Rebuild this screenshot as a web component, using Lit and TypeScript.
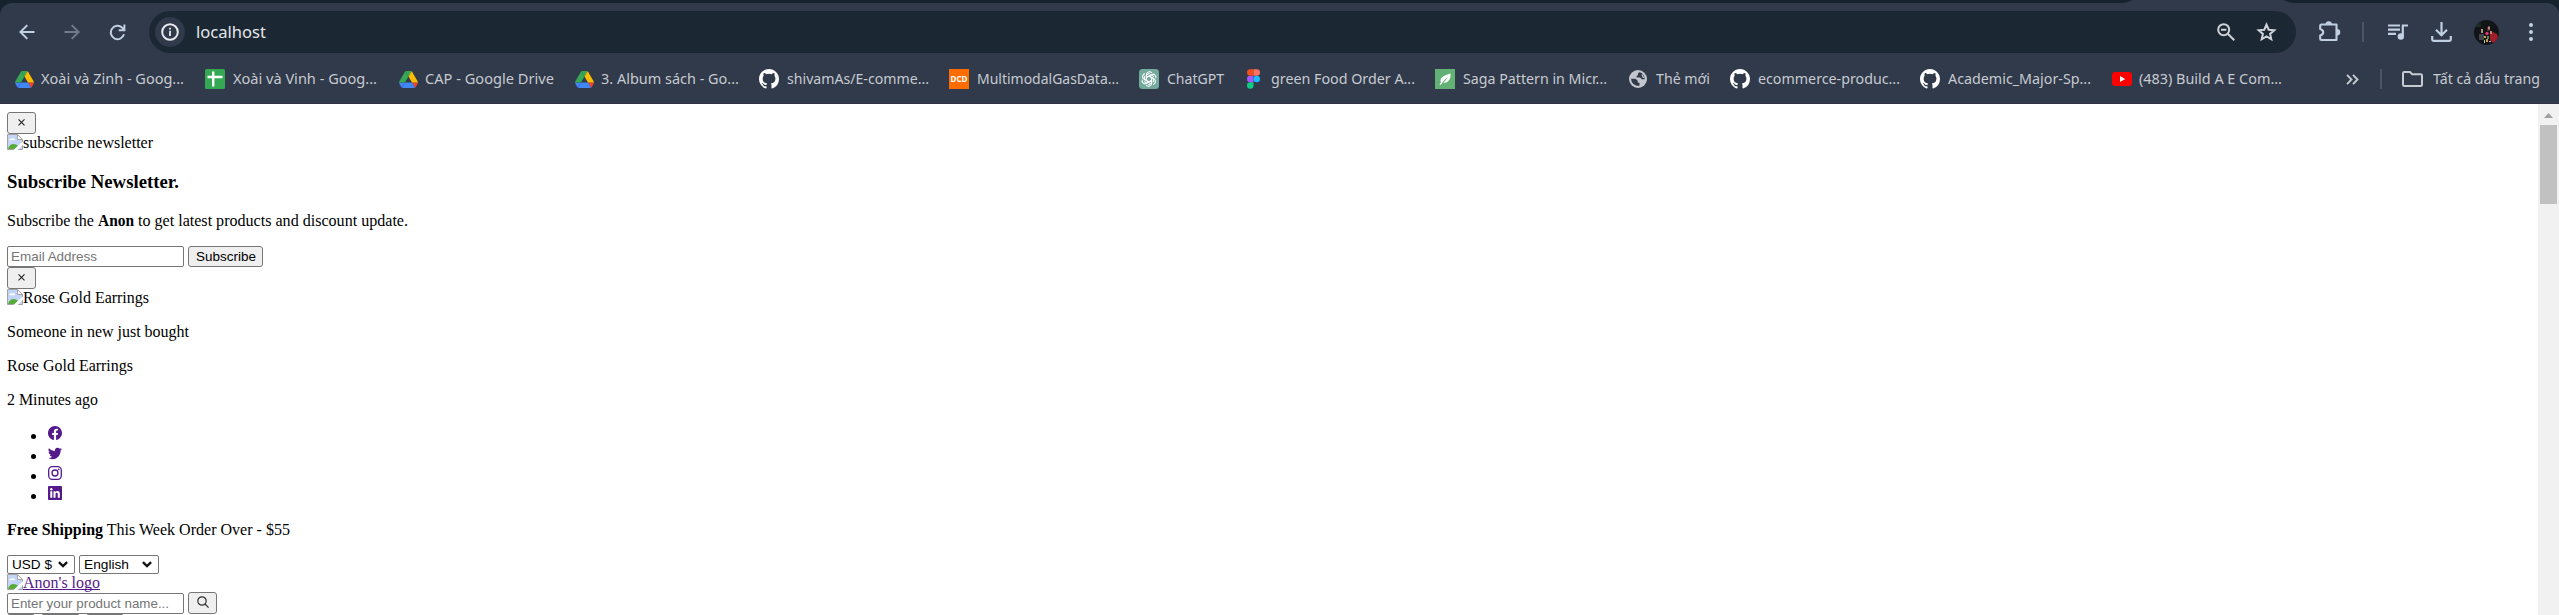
import { LitElement, html, css, svg } from "lit";
import { customElement } from "lit/decorators.js";

const drive = html`<svg width="19" height="17" viewBox="0 0 87.3 78"><path fill="#4285f4" d="M6.6 66.9l3.8 6.6c.8 1.4 2 2.5 3.3 3.3L27.5 53H0c0 1.5.4 3.1 1.2 4.5z"/><path fill="#34a853" d="M43.65 25L29.9 1.2c-1.3.8-2.5 1.9-3.3 3.3L1.2 48.5A9 9 0 0 0 0 53h27.5z"/><path fill="#ea4335" d="M73.55 76.8c1.3-.8 2.5-1.9 3.3-3.3l1.6-2.75 7.65-13.25c.8-1.4 1.2-3 1.2-4.5H59.8l5.85 11.5z"/><path fill="#34a853" d="M43.65 25L57.4 1.2A9 9 0 0 0 52.9 0H34.4c-1.6 0-3.2.4-4.5 1.2z"/><path fill="#4285f4" d="M59.8 53H27.5L13.75 76.8c1.35.8 2.9 1.2 4.5 1.2h50.8c1.6 0 3.2-.45 4.5-1.2z"/><path fill="#fbbc04" d="M73.4 26.5L60.7 4.5a9 9 0 0 0-3.3-3.3L43.65 25 59.8 53h27.45c0-1.55-.4-3.1-1.2-4.5z"/></svg>`;
const sheets = html`<svg width="20" height="20" viewBox="0 0 20 20"><rect width="20" height="20" rx="1.5" fill="#34a853"/><path d="M8.200 2.500v15M2.500 8h15" stroke="#fff" stroke-width="2.4"/></svg>`;
const github = html`<svg width="20" height="20" viewBox="0 0 16 16" fill="#fff"><path d="M8 0C3.58 0 0 3.58 0 8c0 3.54 2.29 6.53 5.47 7.59.4.07.55-.17.55-.38 0-.19-.01-.82-.01-1.49-2.01.37-2.53-.49-2.69-.94-.09-.23-.48-.94-.82-1.13-.28-.15-.68-.52-.01-.53.63-.01 1.08.58 1.23.82.72 1.21 1.87.87 2.33.66.07-.52.28-.87.51-1.07-1.78-.2-3.64-.89-3.64-3.95 0-.87.31-1.59.82-2.15-.08-.2-.36-1.02.08-2.12 0 0 .67-.21 2.2.82a7.6 7.6 0 0 1 4 0c1.53-1.04 2.2-.82 2.2-.82.44 1.1.16 1.92.08 2.12.51.56.82 1.27.82 2.15 0 3.07-1.87 3.75-3.65 3.95.29.25.54.73.54 1.48 0 1.07-.01 1.93-.01 2.2 0 .21.15.46.55.38A8 8 0 0 0 16 8c0-4.42-3.58-8-8-8z"/></svg>`;
const dcd = html`<span class="dcd">DCD</span>`;
const gpt = html`<svg width="20" height="20" viewBox="0 0 20 20"><rect width="20" height="20" rx="3.5" fill="#74aa9c"/><g fill="none" stroke="#fff" stroke-width="1.05">${[0, 60, 120, 180, 240, 300].map(a => svg`<path transform="rotate(${a} 10 10)" d="M7.4 11.5V5.700a3 3 0 0 1 5.300-1.900M7.400 8.500l4.600-2.700 3.200 1.800"/>`)}</g></svg>`;
const figma = html`<svg width="13" height="20" viewBox="0 0 200 300"><path fill="#0acf83" d="M50 300a50 50 0 0 0 50-50v-50H50a50 50 0 0 0 0 100z"/><path fill="#a259ff" d="M0 150a50 50 0 0 1 50-50h50v100H50a50 50 0 0 1-50-50z"/><path fill="#f24e1e" d="M0 50A50 50 0 0 1 50 0h50v100H50A50 50 0 0 1 0 50z"/><path fill="#ff7262" d="M100 0h50a50 50 0 0 1 0 100h-50z"/><circle cx="150" cy="150" r="50" fill="#1abcfe"/></svg>`;
const leaf = html`<svg width="20" height="20" viewBox="0 0 20 20"><rect width="20" height="20" fill="#63b175"/><path fill="#fff" d="M15.500 4.500c.5 6-2.500 9.500-7.200 9.300 1.700-1.700 3.200-3.600 4.500-5.900-2.300 2-4.600 4.300-7.300 8l-1-.3c.5-1 .9-1.600 1.400-2.400-1.700-5 3.500-6.700 9.600-8.700z"/></svg>`;
const globe = html`<svg width="18" height="18" viewBox="0 0 18 18"><circle cx="9" cy="9" r="9" fill="#c3c6cd"/><g fill="#303a4a"><path d="M10.500 2.200 9 3.300v1.900L7.300 6l.6 1.600h3.300l1.500 1.700h3.200C15.700 5.500 13.500 2.900 10.500 2.200z"/><path d="M2.200 8.700h4.300l2.200 2.100v2h1.800v2.900C5.800 16.200 2 13 2.200 8.700z"/></g><path d="m13 4.500 1 2.500 1.500.8" stroke="#c3c6cd" stroke-width="1.200" fill="none"/></svg>`;
const youtube = html`<svg width="20" height="14" viewBox="0 0 20 14"><rect width="20" height="14" rx="3" fill="#f00"/><path d="M8 4v6l5.200-3z" fill="#fff"/></svg>`;

const bookmarks: [unknown, string, number, number, number][] = [
  [drive, "Xoài và Zinh - Goog...", 15, 41, 143],
  [sheets, "Xoài và Vinh - Goog...", 205, 233, 144],
  [drive, "CAP - Google Drive", 399, 425, 129],
  [drive, "3. Album sách - Go...", 575, 601, 138],
  [github, "shivamAs/E-comme...", 759, 787, 142],
  [dcd, "MultimodalGasData...", 949, 977, 142],
  [gpt, "ChatGPT", 1139, 1167, 57],
  [figma, "green Food Order A...", 1247, 1271, 144],
  [leaf, "Saga Pattern in Micr...", 1435, 1463, 144],
  [globe, "Thẻ mới", 1629, 1656, 54],
  [github, "ecommerce-produc...", 1730, 1758, 142],
  [github, "Academic_Major-Sp...", 1920, 1948, 143],
  [youtube, "(483) Build A E Com...", 2112, 2139, 143],
];

/** Text set to an exact width. */
@customElement("fit-text")
class FitText extends LitElement {
  static properties = { w: { type: Number }, text: {} };
  declare w: number;
  declare text: string;
  static styles = css`:host{display:block;flex:none;white-space:pre}span{display:inline-block;transform-origin:0 50%;text-decoration:inherit}`;
  render() { return html`<span>${this.text}</span>`; }
  updated() {
    const s = this.renderRoot.querySelector("span") as HTMLElement;
    this.style.width = this.w + "px";
    s.style.transform = `scaleX(${this.w / s.getBoundingClientRect().width})`;
  }
}
const fit = (text: string, w: number) => html`<fit-text .w=${w} .text=${text}></fit-text>`;

@customElement("broken-image")
class BrokenImage extends LitElement {
  static styles = css`:host{display:block;flex:none;width:16px;height:16px}svg{display:block}`;
  render() {
    return html`<svg width="16" height="16" viewBox="0 0 16 16"><path d="M.5.5h10l5 5v10H.5z" fill="#c3d5f7"/><path d="M2.500 6.200c-.2-1.600 1.500-2.300 2.300-1.400C5.500 3.200 8 3.700 8 6.200z" fill="#fff"/><path d="M1 15c.8-3.200 3-5 5.500-5 2 0 3.500.8 4.500 2l-3 3z" fill="#56ab3c"/><path d="M.5 15.500V.500h10l5 5v10z" fill="none" stroke="#a3a3a3"/><path d="M10.500.5v5h5z" fill="#fff" stroke="#a3a3a3"/><path d="M6.500 16 16 7.200v3.600L10.700 16z" fill="#fff"/></svg>`;
  }
}

const cross = html`<svg width="9" height="9" viewBox="0 0 9 9"><path d="M1.500 1.300l6 6m0-6l-6 6" stroke="#222" stroke-width="1.1"/></svg>`;
const chevron = html`<svg width="10" height="7" viewBox="0 0 10 7"><path d="M.9 1.100 5 5.100l4.100-4" fill="none" stroke="#111" stroke-width="2.300"/></svg>`;

const social = [
  svg`<path d="M16 8.049c0-4.446-3.582-8.05-8-8.05C3.580 0-.002 3.603-.002 8.050c0 4.017 2.926 7.347 6.750 7.951v-5.625h-2.030V8.050H6.750V6.275c0-2.017 1.195-3.131 3.022-3.131.876 0 1.791.157 1.791.157v1.980h-1.009c-.993 0-1.303.621-1.303 1.258v1.510h2.218l-.354 2.326H9.250V16c3.824-.604 6.750-3.934 6.750-7.951z"/>`,
  svg`<path d="M5.026 15c6.038 0 9.341-5.003 9.341-9.334 0-.14 0-.282-.006-.422A6.700 6.700 0 0 0 16 3.542a6.700 6.700 0 0 1-1.889.518 3.300 3.300 0 0 0 1.447-1.817 6.500 6.500 0 0 1-2.087.793A3.286 3.286 0 0 0 7.875 6.030a9.300 9.300 0 0 1-6.767-3.429 3.290 3.290 0 0 0 1.018 4.382A3.300 3.300 0 0 1 .640 6.575v.045a3.290 3.290 0 0 0 2.632 3.218 3.200 3.200 0 0 1-.865.115 3 3 0 0 1-.614-.057 3.280 3.280 0 0 0 3.067 2.277A6.600 6.600 0 0 1 .780 13.580a6 6 0 0 1-.780-.045A9.340 9.340 0 0 0 5.026 15z"/>`,
  svg`<g fill="none" stroke="#551a8b" stroke-width="1.500"><rect x=".8" y=".8" width="14.400" height="14.400" rx="4"/><circle cx="8" cy="8" r="3.400"/></g><circle cx="12.200" cy="3.800" r="1"/>`,
  svg`<path d="M1.200 0h13.600C15.500 0 16 .5 16 1.200v13.600c0 .7-.5 1.200-1.200 1.200H1.200C.5 16 0 15.500 0 14.800V1.200C0 .5.5 0 1.200 0z"/><g fill="#fff"><circle cx="3.800" cy="3.700" r="1.350"/><path d="M2.600 6h2.300v7.500H2.600zM6.300 6h2.200v1c.5-.8 1.300-1.200 2.300-1.200 2.100 0 2.700 1.400 2.700 3.400v4.300h-2.300V9.700c0-1-.2-1.900-1.200-1.900-1.100 0-1.400.8-1.400 1.900v3.800H6.300z"/></g>`,
];

@customElement("app-root")
class AppRoot extends LitElement {
  static styles = css`
    :host{display:block;width:2559px;height:615px;overflow:hidden;background:#fff}
    *{box-sizing:border-box}
    svg{display:block;flex:none}
    .chrome{height:104px;background:#16222e;font-family:"Noto Sans",sans-serif;color:#c7cad1}
    .tab{height:3px;padding-left:2120px}
    .inner{height:101px;background:#303a4a;border-radius:12px 12px 0 0;box-shadow:inset 0 -1px #303145}
    .tools{display:flex;align-items:center;height:58px;padding-left:19px;color:#c1cfe3}
    .nav{display:flex;align-items:center;gap:29px;width:130px;flex:none}
    .omni{display:flex;align-items:center;width:2147px;height:42px;border-radius:21px;background:#1b2834;padding:0 19px 0 6px;flex:none;color:#d0d2d8}
    .info{display:grid;place-items:center;width:30px;height:30px;border-radius:50%;background:#303a4a;margin-right:11px;color:#e8eaee}
    .url{font-size:17px;line-height:24px;color:#e4e6ea;flex:1}
    .omni .glass{margin-right:21px}
    .puzzle{margin-left:23px}
    .s1{margin-left:21px}
    .music{margin-left:24px}
    .down{margin-left:23px}
    .avatar{margin-left:22px}
    .dots{margin-left:30px}
    .marks{display:flex;align-items:center;height:36px;font-size:15px;line-height:20px}
    .marks fit-text{padding-bottom:2px}
    .mark{display:flex;align-items:center;justify-content:space-between;flex:none}
    .more{margin-left:64px}
    .s2{margin-left:21px}
    .folder{margin:0 10px 0 20px}
    .sep{width:2px;height:20px;background:#4a5567;flex:none}
    .dcd{width:20px;height:20px;background:#ff6d00;color:#fff;font:bold 8px/20px "Noto Sans",sans-serif;text-align:center;flex:none}
    .body{display:flex;height:511px}
    .page{flex:1;padding:8px 7px 0;font:16px/18px "Liberation Serif",serif;color:#000;overflow:hidden}
    .bar{width:21px;background:#f1f1f1;display:flex;flex-direction:column;align-items:center;flex:none}
    .thumb{width:17px;height:79px;background:#c1c1c1}
    .up{height:21px;padding-top:9px}
    .row{display:flex;gap:4px;align-items:flex-end}
    .btn{border:1px solid #767676;border-radius:3px;background:#efefef;display:flex;align-items:center;justify-content:center;font:13.333px/15px "Liberation Sans",sans-serif;width:29px;height:22px;padding-bottom:2px}
    .sub{width:75px;height:21px;padding:0}
    .field{border:1px solid #767676;border-radius:2px;width:177px;height:21px;padding:0 3px;color:#757575;font:13.333px/19px "Liberation Sans",sans-serif}
    .sel{border:1px solid #767676;border-radius:2px;height:19px;padding:0 6px 0 4px;display:flex;align-items:center;justify-content:space-between;font:13.333px/17px "Liberation Sans",sans-serif}
    .usd{width:68px}
    .eng{width:80px}
    .alt{display:flex;height:18px}
    .h{font-weight:bold;font-size:18.5px;line-height:21px;margin:20px 0 19px}
    .p{display:flex;margin:16px 0}
    .b{font-weight:bold}
    .list{margin:16px 0}
    .item{display:flex;height:20px;padding-left:24px}
    .dot{width:5px;height:5px;border-radius:50%;background:#000;margin:9px 12px 0 0}
    .ic{margin-top:1px}
    .a{color:#551a8b}
    .u{border-bottom:1px solid #551a8b;height:16px}
    .next{display:flex;gap:6px}
    .seg{height:3px;background:#767676;border-radius:3px 3px 0 0}
  `;
  render() {
    let pos = 0;
    return html`
    <div class="chrome">
      <div class="tab"><svg width="176" height="3" viewBox="0 0 176 3"><path d="M0 3C5 3 9 2 12 0h152c3 2 7 3 12 3z" fill="#303a4a"/></svg></div>
      <div class="inner">
        <div class="tools">
          <div class="nav">
            <svg width="16" height="16" viewBox="0 0 16 16" fill="none" stroke="currentColor" stroke-width="2"><path d="M15.500 8H1.800M8.300 1.100 1.400 8l6.900 6.900"/></svg>
            <svg width="16" height="16" viewBox="0 0 16 16" fill="none" stroke="#717a88" stroke-width="2"><path d="M.5 8h13.700M7.700 1.100 14.600 8l-6.900 6.900"/></svg>
            <svg width="17" height="17" viewBox="0 0 17 17" fill="none" stroke="currentColor" stroke-width="2"><path d="M15 10.300A6.700 6.700 0 1 1 13.200 3.700L15 5.500M15.400.5v5.700H9.700"/></svg>
          </div>
          <div class="omni">
            <div class="info"><svg width="18" height="18" viewBox="0 0 18 18"><circle cx="9" cy="9" r="7.800" fill="none" stroke="currentColor" stroke-width="2"/><path d="M9 7.800v5.200M9 4.700v1.900" stroke="currentColor" stroke-width="1.800"/></svg></div>
            <div class="url">${fit("localhost", 70)}</div>
            <svg class="glass" width="18" height="18" viewBox="0 0 18 18" fill="none" stroke="currentColor" stroke-width="2"><circle cx="6.700" cy="6.700" r="5.500"/><path d="m10.800 10.800 6.500 6.500M4 6.700h5.400"/></svg>
            <svg width="21" height="20" viewBox="0 0 21 20" fill="none" stroke="currentColor" stroke-width="2"><path d="m10.500 2.600 2.200 5.100 5.600.5-4.200 3.700 1.200 5.400-4.800-2.900-4.800 2.900 1.200-5.400-4.200-3.700 5.600-.5z"/></svg>
          </div>
          <svg class="puzzle" width="22" height="22" viewBox="0 0 22 22"><path d="M2.500 3.500h15v15.500h-15c-.8 0-1.300-.5-1.300-1.300V14.500c4-1.200 4-5.300 0-6.500V4.800c0-.8.5-1.300 1.300-1.300z" fill="none" stroke="currentColor" stroke-width="2.100" stroke-linejoin="round"/><path d="M6.500 3.500a3.200 3.200 0 0 1 6.400 0zM18 8a3.300 3.300 0 0 1 0 6.600z" fill="currentColor"/></svg>
          <div class="sep s1"></div>
          <svg class="music" width="20" height="16" viewBox="0 0 20 16"><path d="M0 1.500h12M0 5.700h12M0 9.900h8M14.800 12.500V1.500H20" fill="none" stroke="currentColor" stroke-width="2.200"/><circle cx="12.800" cy="12.500" r="3.200" fill="currentColor"/></svg>
          <svg class="down" width="21" height="20" viewBox="0 0 21 20" fill="none" stroke="currentColor" stroke-width="2.200"><path d="M10.500 0v13M5 7.800l5.500 5.500L16 7.800M1.200 14v3.600c0 .8.500 1.300 1.300 1.300h16c.8 0 1.300-.5 1.300-1.300V14"/></svg>
          <svg class="avatar" width="25" height="25" viewBox="0 0 25 25"><defs><clipPath id="av"><circle cx="12.500" cy="12.500" r="12.500"/></clipPath></defs><g clip-path="url(#av)"><path fill="#121517" d="M0 0h25v25H0z"/><path d="M2 3h5v4H2z" fill="#1d2b22"/><path fill="#9c1f2a" d="m16 14 3-2 4 2 2 6-6 3-3-3z"/><path fill="#5b2424" d="M13 7h3v4h-3z"/><path fill="#b58d7d" d="M7 9h2v4H7zM14 6.500h2v3h-2zM16 11h2v3h-2z"/><path fill="#41464a" d="M5 14h5v6H5z"/><circle cx="13" cy="13.500" r="1.700" fill="#e0307a"/><path fill="#c3a252" d="M10 16h2v2h-2zM12 19h2v3h-2z"/><path fill="#5e8040" d="M13 16h2v3h-2z"/><path fill="#c9b8ad" d="M10 20h1v3h-1zM15 21h2v1h-2z"/></g></svg>
          <svg class="dots" width="4" height="18" viewBox="0 0 4 18" fill="currentColor"><circle cx="2" cy="2" r="2"/><circle cx="2" cy="9" r="2"/><circle cx="2" cy="16" r="2"/></svg>
        </div>
        <div class="marks">${bookmarks.map(([ic, t, ix, tx, w]) => {
          const item = html`<div class="mark" style="margin-left:${ix - pos}px;width:${tx - ix + w}px">${ic}${fit(t, w)}</div>`;
          pos = tx + w;
          return item;
        })}
          <svg class="more" width="13" height="11" viewBox="0 0 13 11" fill="none" stroke="currentColor" stroke-width="1.900"><path d="m1 .8 4.500 4.700L1 10.200M7 .8l4.500 4.700L7 10.200"/></svg>
          <div class="sep s2"></div>
          <svg class="folder" width="21" height="16" viewBox="0 0 21 16"><path d="M1 2.200C1 1.500 1.500 1 2.200 1H8l2.200 2.300h8.600c.7 0 1.200.5 1.200 1.200v9.300c0 .7-.5 1.200-1.200 1.200H2.200C1.500 15 1 14.500 1 13.800z" fill="none" stroke="currentColor" stroke-width="2"/></svg>
          ${fit("Tất cả dấu trang", 107)}
        </div>
      </div>
    </div>
    <div class="body">
      <div class="page">
        <div class="btn">${cross}</div>
        <div class="alt"><broken-image></broken-image>${fit("subscribe newsletter", 130)}</div>
        <div class="h">${fit("Subscribe Newsletter.", 172)}</div>
        <div class="p">${fit("Subscribe the ", 91)}<span class="b">${fit("Anon", 36)}</span>${fit(" to get latest products and discount update.", 274)}</div>
        <div class="row"><div class="field">${fit("Email Address", 86)}</div><div class="btn sub">${fit("Subscribe", 60)}</div></div>
        <div class="btn">${cross}</div>
        <div class="alt"><broken-image></broken-image>${fit("Rose Gold Earrings", 126)}</div>
        <div class="p">${fit("Someone in new just bought", 182)}</div>
        <div class="p">${fit("Rose Gold Earrings", 126)}</div>
        <div class="p">${fit("2 Minutes ago", 91)}</div>
        <div class="list">${social.map(s => html`<div class="item"><span class="dot"></span><svg class="ic" width="14" height="14" viewBox="0 0 16 16" fill="#551a8b">${s}</svg></div>`)}</div>
        <div class="p"><span class="b">${fit("Free Shipping", 96)}</span>${fit(" This Week Order Over - $55", 187)}</div>
        <div class="row"><div class="sel usd">${fit("USD $", 40)}${chevron}</div><div class="sel eng">${fit("English", 45)}${chevron}</div></div>
        <div class="alt a"><broken-image></broken-image><div class="u">${fit("Anon's logo", 77)}</div></div>
        <div class="row"><div class="field">${fit("Enter your product name...", 158)}</div><div class="btn"><svg width="12" height="12" viewBox="0 0 12 12" fill="none" stroke="#333" stroke-width="1.200"><circle cx="5" cy="5" r="4.200"/><path d="m8 8 3.600 3.600"/></svg></div></div>
        <div class="next"><div class="seg" style="width:28px"></div><div class="seg" style="width:39px"></div><div class="seg" style="width:38px"></div></div>
      </div>
      <div class="bar"><div class="up"><svg width="9" height="5" viewBox="0 0 9 5"><path d="M4.500 0 9 5H0z" fill="#a0a0a0"/></svg></div><div class="thumb"></div></div>
    </div>`;
  }
}
